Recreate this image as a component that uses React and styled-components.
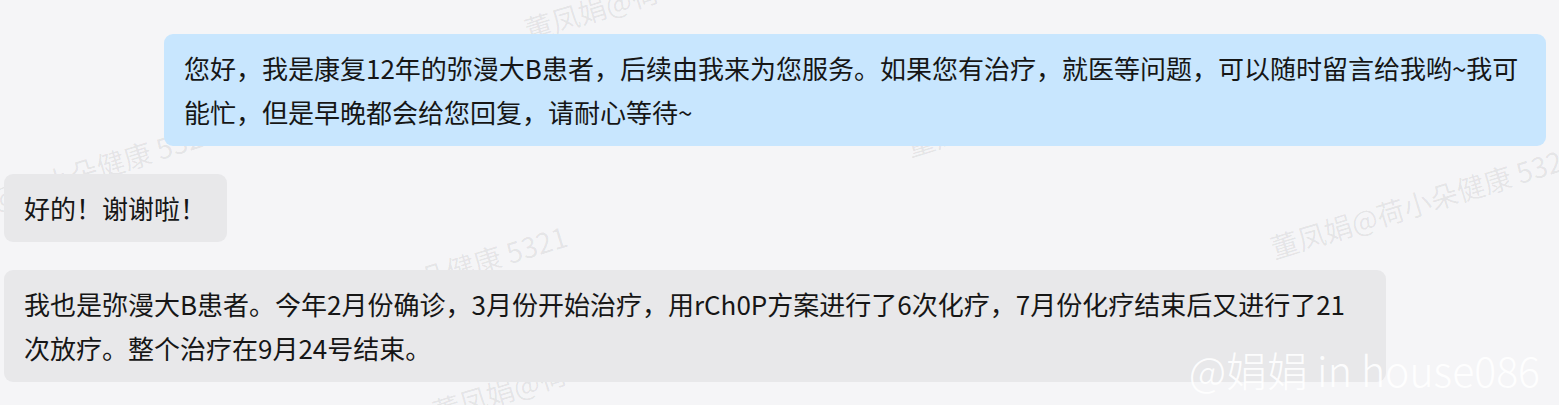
import React from "react";
import styled, { createGlobalStyle } from "styled-components";

const GlobalStyle = createGlobalStyle`
  html, body {
    margin: 0;
    padding: 0;
    background: #f5f5f7;
  }
  body {
    font-family: "Noto Sans CJK SC", "Noto Sans", sans-serif;
  }
`;

const Page = styled.div`
  position: relative;
  height: 405px;
  overflow: hidden;
  background: #f5f5f7;
`;

const MarkLayer = styled.div`
  position: absolute;
  inset: 0;
  pointer-events: none;
`;

const Mark = styled.span`
  position: absolute;
  left: ${({ $x }) => $x}px;
  top: ${({ $y }) => $y - 34}px;
  transform-origin: 0 100%;
  transform: rotate(-17deg);
  white-space: nowrap;
  font-size: 28px;
  line-height: 34px;
  color: rgba(0, 0, 0, 0.075);
`;

const Thread = styled.div`
  position: relative;
  z-index: 1;
  display: flex;
  flex-direction: column;
  gap: 28px;
  padding: 34px 13px 0 4px;
`;

const Bubble = styled.div`
  align-self: ${({ $mine }) => ($mine ? "flex-end" : "flex-start")};
  max-width: 1382px;
  box-sizing: border-box;
  padding: 12px 21px 12px 20px;
  border-radius: 9px;
  background: ${({ $mine }) => ($mine ? "#c8e6fe" : "#e8e8ea")};
  color: #161616;
  font-size: 26px;
  line-height: 44px;
`;

const Signature = styled.div`
  position: absolute;
  right: 19px;
  bottom: 12px;
  z-index: 2;
  font-size: 41px;
  font-weight: 300;
  line-height: 48px;
  color: rgba(255, 255, 255, 0.92);
  white-space: nowrap;
`;

// watermark anchors: left end of the baseline, before rotation
const marks = [
  [530, 46],
  [912, 162],
  [1276, 264],
  [-84, 240],
  [266, 344],
  [438, 428],
];

const messages = [
  {
    mine: true,
    text: "您好，我是康复12年的弥漫大B患者，后续由我来为您服务。如果您有治疗，就医等问题，可以随时留言给我哟~我可能忙，但是早晚都会给您回复，请耐心等待~",
  },
  { mine: false, text: "好的！谢谢啦！" },
  {
    mine: false,
    text: "我也是弥漫大B患者。今年2月份确诊，3月份开始治疗，用rCh0P方案进行了6次化疗，7月份化疗结束后又进行了21次放疗。整个治疗在9月24号结束。",
  },
];

const App = () => {
  return (
    <Page>
      <GlobalStyle />
      <MarkLayer>
        {marks.map(([x, y], i) => (
          <Mark key={i} $x={x} $y={y}>
            董凤娟@荷小朵健康 5321
          </Mark>
        ))}
      </MarkLayer>
      <Thread>
        {messages.map((m, i) => (
          <Bubble key={i} $mine={m.mine}>
            {m.text}
          </Bubble>
        ))}
      </Thread>
      <Signature>@娟娟 in house086</Signature>
    </Page>
  );
};

export default App;
